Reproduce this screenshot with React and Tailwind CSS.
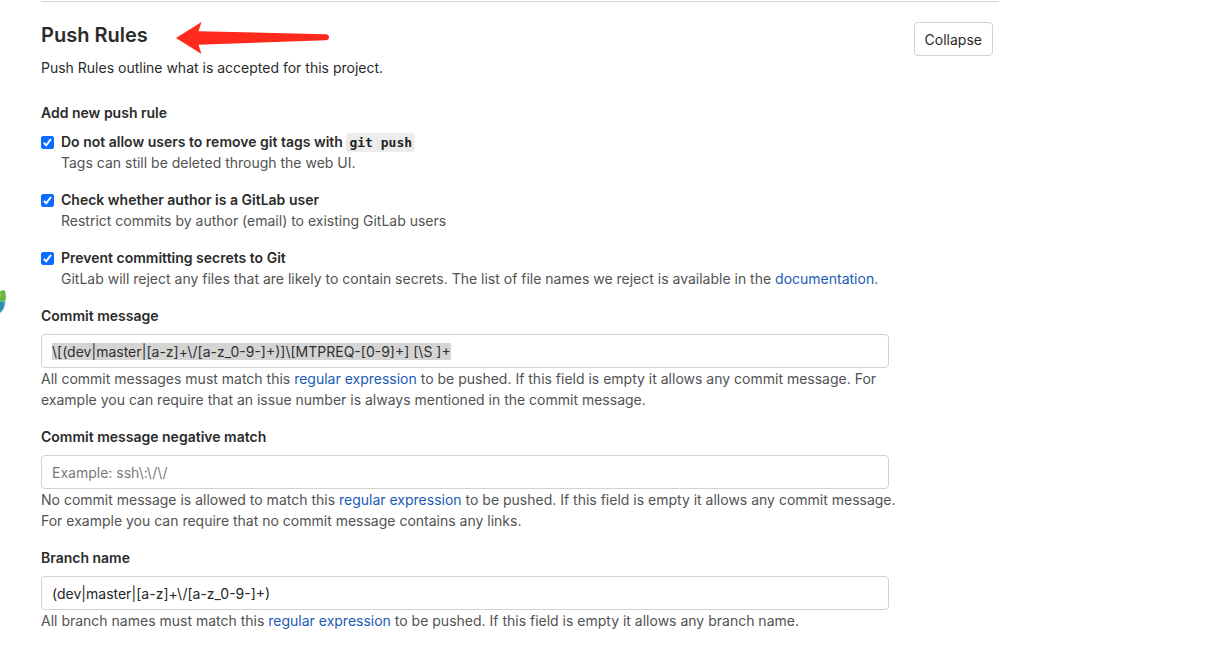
import { useEffect, useRef } from 'react';

const checks = [
  {
    id: 'deny-tags',
    label: (
      <>
        Do not allow users to remove git tags with{' '}
        <code className="rounded bg-[#ececec] px-[3px] py-0.5 font-['DejaVu_Sans_Mono','Liberation_Mono',monospace] text-[13px] text-[#1f1f1f]">
          git push
        </code>
      </>
    ),
    help: 'Tags can still be deleted through the web UI.',
  },
  {
    id: 'member-check',
    label: 'Check whether author is a GitLab user',
    help: 'Restrict commits by author (email) to existing GitLab users',
  },
  {
    id: 'prevent-secrets',
    label: 'Prevent committing secrets to Git',
    help: (
      <>
        GitLab will reject any files that are likely to contain secrets. The list of file names we
        reject is available in the <Link>documentation</Link>.
      </>
    ),
  },
];

function Link({ children }) {
  return (
    <a href="#" className="text-[#1b5bb5] hover:underline">
      {children}
    </a>
  );
}

function CheckRule({ id, label, help }) {
  return (
    <div className="flex items-start gap-[7px]">
      <span className="relative mt-[5px] flex size-[13px] shrink-0">
        <input
          id={id}
          type="checkbox"
          defaultChecked
          className="peer size-[13px] appearance-none rounded-[2px] border border-[#767676] checked:border-[#0d6bff] checked:bg-[#0d6bff]"
        />
        <svg
          viewBox="0 0 13 13"
          className="pointer-events-none absolute inset-0 size-[13px] opacity-0 peer-checked:opacity-100"
          fill="none"
          stroke="white"
          strokeWidth="2"
        >
          <path d="M2.8 6.9 5.2 9.3 10 3" />
        </svg>
      </span>
      <div className="-mr-4">
        <label htmlFor={id} className="block h-[21px] font-semibold">
          {label}
        </label>
        <p className="text-[#525252]">{help}</p>
      </div>
    </div>
  );
}

function TextRule({ id, label, inputRef, children, ...inputProps }) {
  return (
    <div>
      <label htmlFor={id} className="mb-2 block font-semibold">
        {label}
      </label>
      <input
        ref={inputRef}
        id={id}
        type="text"
        spellCheck={false}
        className="block h-[34px] w-full rounded border border-[#d2d2d2] bg-white px-2.5 text-[#262626] outline-none placeholder:text-[#7a7a7a] selection:bg-[#d4d4d4] selection:text-[#303030]"
        {...inputProps}
      />
      <p className="-mr-4 text-[#525252]">{children}</p>
    </div>
  );
}

function Globe() {
  return (
    <svg viewBox="0 0 6 26" className="absolute left-0 top-[289px] h-[26px] w-[6px]" aria-hidden="true">
      <path d="M0 2.5C1.5 1.5 3 1.2 4.5 1 5.3 3 6 5.5 5.8 9.5 5.7 11 5.2 12 4.5 12.5H0Z" fill="#63b946" />
      <path d="M0 5 2 4 1.2 8 0 9Z" fill="#b4b23d" />
      <path d="M0 12.5H4.8C5 17 3.5 21 0 24Z" fill="#2f8fb3" />
      <path d="M5.5 12.5C5.3 17.5 3.5 21.5 0 24.5" fill="none" stroke="#9ecbdc" strokeWidth=".8" />
    </svg>
  );
}

export default function App() {
  const commitRef = useRef(null);

  useEffect(() => {
    commitRef.current.focus();
    commitRef.current.select();
  }, []);

  return (
    <main className="relative min-h-screen bg-white pb-5 pl-[41px] pr-5 pt-px font-['Inter','Liberation_Sans',sans-serif] text-sm leading-[21px] text-[#2b2b2b]">
      <Globe />
      <section className="max-w-[958px] border-t border-[#d4d4d4] pr-1.5 pt-5">
        <header className="flex items-start justify-between">
          <div>
            <div className="flex items-start gap-7">
              <h4 className="text-xl leading-[26px] font-semibold">Push Rules</h4>
              <svg viewBox="0 0 153 32" className="-mb-[5px] h-8 w-[153px]" aria-hidden="true">
                <path
                  d="M0 16 25.5 0 22.5 9.2 150 12.2Q153 12.5 153 15.2T150 18.2L22.5 22.8 25.5 32Z"
                  fill="#ff2a1c"
                />
              </svg>
            </div>
            <p className="mt-2">Push Rules outline what is accepted for this project.</p>
          </div>
          <button
            type="button"
            className="h-[34px] rounded border border-[#d2d2d2] bg-white px-2.5 hover:bg-gray-50"
          >
            Collapse
          </button>
        </header>
        <form className="mt-6 max-w-[848px]">
          <h5 className="mb-2 font-semibold">Add new push rule</h5>
          <div className="flex flex-col gap-4">
            {checks.map((rule) => (
              <CheckRule key={rule.id} {...rule} />
            ))}
            <TextRule
              id="commit-message"
              label="Commit message"
              inputRef={commitRef}
              defaultValue={'\\[(dev|master|[a-z]+\\/[a-z_0-9-]+)]\\[MTPREQ-[0-9]+] [\\S ]+'}
            >
              All commit messages must match this <Link>regular expression</Link> to be pushed. If
              this field is empty it allows any commit message. For example you can require that an
              issue number is always mentioned in the commit message.
            </TextRule>
            <TextRule
              id="negative-match"
              label="Commit message negative match"
              placeholder={'Example: ssh\\:\\/\\/'}
            >
              No commit message is allowed to match this <Link>regular expression</Link> to be
              pushed. If this field is empty it allows any commit message. For example you can
              require that no commit message contains any links.
            </TextRule>
            <TextRule
              id="branch-name"
              label="Branch name"
              defaultValue={'(dev|master|[a-z]+\\/[a-z_0-9-]+)'}
            >
              All branch names must match this <Link>regular expression</Link> to be pushed. If this
              field is empty it allows any branch name.
            </TextRule>
          </div>
        </form>
      </section>
    </main>
  );
}
